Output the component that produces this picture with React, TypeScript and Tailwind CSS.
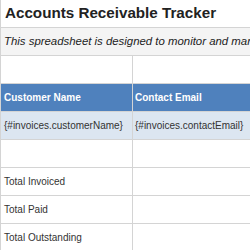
import React from "react";

const font = { fontFamily: '"Liberation Sans", Arial, sans-serif' };

function Row({
  left,
  right,
  rowClass = "bg-white",
  textClass = "text-[#333333]",
}: {
  left?: string;
  right?: string;
  rowClass?: string;
  textClass?: string;
}) {
  return (
    <div className={`flex h-[28px] border-b border-[#d4d4d4] ${rowClass}`}>
      <div className={`w-[132px] shrink-0 border-r border-[#d4d4d4] flex items-center pl-[3px] text-[10px] whitespace-nowrap overflow-hidden ${textClass}`}>
        {left}
      </div>
      <div className={`flex-1 flex items-center pl-[2px] text-[10px] whitespace-nowrap overflow-hidden ${textClass}`}>
        {right}
      </div>
    </div>
  );
}

export default function App() {
  return (
    <div className="w-[250px] h-[250px] overflow-hidden bg-white" style={font}>
      <div className="border-l border-[#d4d4d4] w-[400px]">
        <div className="h-[28px] border-b border-[#d4d4d4] flex items-center pl-[4px] text-[15.2px] font-bold text-[#222222] whitespace-nowrap">
          Accounts Receivable Tracker
        </div>
        <div className="h-[28px] border-b border-[#d4d4d4] bg-[#f4f4f4] flex items-center pl-[3px] text-[11.4px] italic text-[#222222] whitespace-nowrap">
          This spreadsheet is designed to monitor and manage accounts receivable.
        </div>
        <Row />
        <Row
          left="Customer Name"
          right="Contact Email"
          rowClass="bg-[#4f81bd]"
          textClass="text-white font-bold"
        />
        <Row
          left="{#invoices.customerName}"
          right="{#invoices.contactEmail}"
          rowClass="bg-[#dce6f1]"
        />
        <Row />
        <Row left="Total Invoiced" />
        <Row left="Total Paid" />
        <Row left="Total Outstanding" />
      </div>
    </div>
  );
}
